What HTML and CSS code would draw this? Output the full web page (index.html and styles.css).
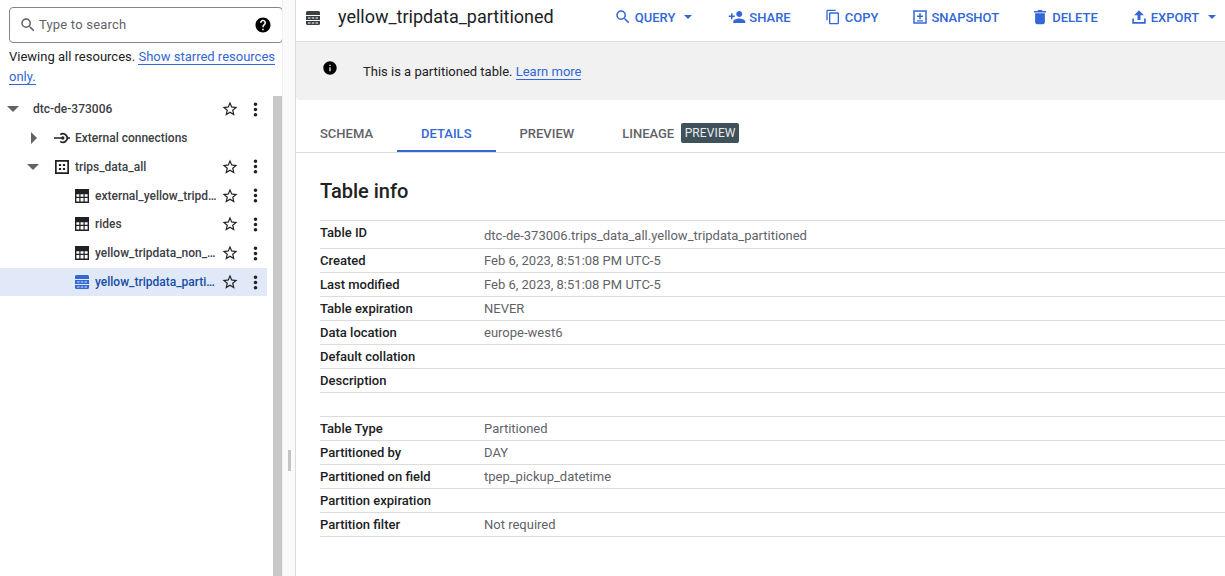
FILE: index.html
```html
<!DOCTYPE html>
<html lang="en">
<head>
    <meta charset="UTF-8">
    <meta name="viewport" content="width=device-width, initial-scale=1.0">
    <title>yellow_tripdata_partitioned</title>
    <link rel="stylesheet" href="styles.css">
</head>
<body>
    <svg class="sprites" width="0" height="0" aria-hidden="true">
        <symbol id="i-star" viewBox="0 0 24 24"><path d="M22 9.240l-7.190-.62L12 2 9.190 8.630 2 9.240l5.460 4.730L5.820 21 12 17.270 18.180 21l-1.630-7.030L22 9.240zM12 15.400l-3.760 2.270 1-4.280-3.320-2.880 4.380-.38L12 6.100l1.710 4.040 4.380.38-3.320 2.880 1 4.280L12 15.400z"/></symbol>
        <symbol id="i-more" viewBox="0 0 24 24"><path d="M12 8c1.100 0 2-.9 2-2s-.9-2-2-2-2 .9-2 2 .9 2 2 2zm0 2c-1.100 0-2 .9-2 2s.9 2 2 2 2-.9 2-2-.9-2-2-2zm0 6c-1.100 0-2 .9-2 2s.9 2 2 2 2-.9 2-2-.9-2-2-2z"/></symbol>
        <symbol id="i-table" viewBox="0 0 14 14"><path fill-rule="evenodd" d="M0 0h14v14H0zM1.400 5.200v2.600h2.900V5.200zm4.100 0v2.600h3V5.200zm4.200 0v2.600h2.900V5.200zM1.400 9v3.600h2.900V9zm4.100 0v3.600h3V9zm4.200 0v3.600h2.900V9z"/></symbol>
        <symbol id="i-part" viewBox="0 0 14 14"><path fill-rule="evenodd" d="M1.500 0h11A1.500 1.500 0 0 1 14 1.500V4H0V1.500A1.500 1.500 0 0 1 1.500 0zM0 5h14v4H0zM0 10h14v2.500a1.500 1.500 0 0 1-1.500 1.500h-11A1.500 1.500 0 0 1 0 12.500zM2 6.400v1.200h2.500V6.400zm3.800 0v1.200h2.400V6.400zm3.700 0v1.200H12V6.400zM2 11.400v1.200h2.500v-1.200zm3.800 0v1.200h2.400v-1.200zm3.700 0v1.200H12v-1.200z"/></symbol>
    </svg>

    <div class="app">
        <aside class="sidebar">
            <div class="sidebar-main">
                <div class="search">
                    <svg class="search-icon" viewBox="0 0 24 24"><path d="M15.500 14h-.79l-.28-.27A6.470 6.470 0 0 0 16 9.500 6.500 6.500 0 1 0 9.500 16c1.610 0 3.090-.59 4.230-1.570l.27.28v.79l5 4.990L20.490 19l-4.990-5zm-6 0C7.010 14 5 11.990 5 9.500S7.010 5 9.500 5 14 7.010 14 9.500 11.990 14 9.500 14z"/></svg>
                    <span class="search-text">Type to search</span>
                    <svg class="help-icon" viewBox="0 0 24 24"><path d="M12 2C6.480 2 2 6.480 2 12s4.480 10 10 10 10-4.480 10-10S17.520 2 12 2zm1 17h-2v-2h2v2zm2.070-7.750l-.9.920C13.450 12.900 13 13.500 13 15h-2v-.5c0-1.100.45-2.100 1.170-2.830l1.240-1.260c.37-.36.590-.86.590-1.410 0-1.100-.9-2-2-2s-2 .9-2 2H8c0-2.210 1.790-4 4-4s4 1.790 4 4c0 .88-.36 1.680-.93 2.250z"/></svg>
                </div>
                <p class="viewing">Viewing all resources. <a href="#">Show starred resources only.</a></p>
                <div class="tree">
                    <div class="tree-row project">
                        <span class="arrow down"></span>
                        <span class="node-name">dtc-de-373006</span>
                        <svg class="act star"><use href="#i-star"/></svg>
                        <svg class="act more"><use href="#i-more"/></svg>
                    </div>
                    <div class="tree-row connections">
                        <span class="arrow right"></span>
                        <svg class="node-icon conn-icon" viewBox="0 0 16 12"><path d="M0 5.200h7.800v1.600H0zM13.400 5.200H16v1.600h-2.600z"/><circle cx="8.800" cy="6" r="1.700"/><path class="conn-ring" d="M6.300 2.700a4.200 4.200 0 1 1 0 6.600"/></svg>
                        <span class="node-name">External connections</span>
                    </div>
                    <div class="tree-row dataset">
                        <span class="arrow down"></span>
                        <svg class="node-icon" viewBox="0 0 14 14"><path fill-rule="evenodd" d="M0 0h14v14H0zM1.700 1.700v10.600h10.600V1.700zM3.900 3.900h2.200v2.200H3.900zm4 0h2.200v2.200H7.900zM3.900 7.900h2.200v2.200H3.900zm4 0h2.200v2.200H7.900z"/></svg>
                        <span class="node-name">trips_data_all</span>
                        <svg class="act star"><use href="#i-star"/></svg>
                        <svg class="act more"><use href="#i-more"/></svg>
                    </div>
                    <div class="tree-row leaf">
                        <svg class="node-icon"><use href="#i-table"/></svg>
                        <span class="node-name">external_yellow_tripdata</span>
                        <svg class="act star"><use href="#i-star"/></svg>
                        <svg class="act more"><use href="#i-more"/></svg>
                    </div>
                    <div class="tree-row leaf">
                        <svg class="node-icon"><use href="#i-table"/></svg>
                        <span class="node-name">rides</span>
                        <svg class="act star"><use href="#i-star"/></svg>
                        <svg class="act more"><use href="#i-more"/></svg>
                    </div>
                    <div class="tree-row leaf">
                        <svg class="node-icon"><use href="#i-table"/></svg>
                        <span class="node-name">yellow_tripdata_non_partitioned</span>
                        <svg class="act star"><use href="#i-star"/></svg>
                        <svg class="act more"><use href="#i-more"/></svg>
                    </div>
                    <div class="tree-row leaf selected">
                        <svg class="node-icon"><use href="#i-part"/></svg>
                        <span class="node-name">yellow_tripdata_partitioned</span>
                        <svg class="act star"><use href="#i-star"/></svg>
                        <svg class="act more"><use href="#i-more"/></svg>
                    </div>
                </div>
            </div>
            <div class="scrollbar"><div class="thumb"></div></div>
            <div class="resizer"><div class="handle"></div></div>
        </aside>

        <main class="content">
            <header class="topbar">
                <svg class="title-icon"><use href="#i-part"/></svg>
                <h1>yellow_tripdata_partitioned</h1>
                <nav class="actions">
                    <a class="action action-query" href="#">
                        <svg viewBox="0 0 24 24"><path d="M15.500 14h-.79l-.28-.27A6.470 6.470 0 0 0 16 9.500 6.500 6.500 0 1 0 9.500 16c1.610 0 3.090-.59 4.230-1.570l.27.28v.79l5 4.990L20.490 19l-4.990-5zm-6 0C7.010 14 5 11.990 5 9.500S7.010 5 9.500 5 14 7.010 14 9.500 11.990 14 9.500 14z"/></svg>
                        QUERY<span class="caret"></span>
                    </a>
                    <a class="action" href="#">
                        <svg viewBox="0 0 24 24"><path d="M15 12c2.210 0 4-1.790 4-4s-1.790-4-4-4-4 1.790-4 4 1.790 4 4 4zm-9-2V7H4v3H1v2h3v3h2v-3h3v-2H6zm9 4c-2.670 0-8 1.340-8 4v2h16v-2c0-2.660-5.330-4-8-4z"/></svg>
                        SHARE
                    </a>
                    <a class="action action-copy" href="#">
                        <svg viewBox="0 0 24 24"><path d="M16 1H4c-1.100 0-2 .9-2 2v14h2V3h12V1zm3 4H8c-1.100 0-2 .9-2 2v14c0 1.100.9 2 2 2h11c1.100 0 2-.9 2-2V7c0-1.100-.9-2-2-2zm0 16H8V7h11v14z"/></svg>
                        COPY
                    </a>
                    <a class="action action-snapshot" href="#">
                        <svg viewBox="0 0 24 24"><path fill-rule="evenodd" d="M3 3h18v18H3zM5 5v14h14V5zm6 2h2v3h3v2h-3v3h-2v-3H8v-2h3zM8 16.200h8V18H8z"/></svg>
                        SNAPSHOT
                    </a>
                    <a class="action action-delete" href="#">
                        <svg viewBox="0 0 24 24"><path d="M5.500 19c0 1.300 1.100 2.500 2.500 2.500h8c1.400 0 2.500-1.200 2.500-2.500V7h-13v12zM20 4h-4.500l-1-1.500h-5l-1 1.500H4v2h16V4z"/></svg>
                        DELETE
                    </a>
                    <a class="action" href="#">
                        <svg viewBox="0 0 24 24"><path d="M12 3l-6.500 6.500H10V16h4V9.500h4.500zM3 14h2.200v4.800h13.600V14H21v7H3z"/></svg>
                        EXPORT<span class="caret"></span>
                    </a>
                </nav>
            </header>

            <div class="banner">
                <svg class="info-icon" viewBox="0 0 24 24"><path d="M12 2C6.480 2 2 6.480 2 12s4.480 10 10 10 10-4.480 10-10S17.520 2 12 2zm1 15h-2v-6h2v6zm0-8h-2V7h2v2z"/></svg>
                <span>This is a partitioned table. <a href="#">Learn more</a></span>
            </div>

            <div class="tabs">
                <a class="tab" href="#">SCHEMA</a>
                <a class="tab active" href="#">DETAILS</a>
                <a class="tab" href="#">PREVIEW</a>
                <a class="tab" href="#">LINEAGE<span class="tab-badge">PREVIEW</span></a>
            </div>

            <section class="details">
                <h2>Table info</h2>
                <dl class="info-list">
                    <div class="info-row first"><dt>Table ID</dt><dd>dtc-de-373006.trips_data_all.yellow_tripdata_partitioned</dd></div>
                    <div class="info-row"><dt>Created</dt><dd>Feb 6, 2023, 8:51:08 PM UTC-5</dd></div>
                    <div class="info-row"><dt>Last modified</dt><dd>Feb 6, 2023, 8:51:08 PM UTC-5</dd></div>
                    <div class="info-row"><dt>Table expiration</dt><dd>NEVER</dd></div>
                    <div class="info-row"><dt>Data location</dt><dd>europe-west6</dd></div>
                    <div class="info-row"><dt>Default collation</dt><dd></dd></div>
                    <div class="info-row"><dt>Description</dt><dd></dd></div>
                </dl>
                <dl class="info-list second">
                    <div class="info-row"><dt>Table Type</dt><dd>Partitioned</dd></div>
                    <div class="info-row"><dt>Partitioned by</dt><dd>DAY</dd></div>
                    <div class="info-row"><dt>Partitioned on field</dt><dd>tpep_pickup_datetime</dd></div>
                    <div class="info-row"><dt>Partition expiration</dt><dd></dd></div>
                    <div class="info-row"><dt>Partition filter</dt><dd>Not required</dd></div>
                </dl>
            </section>
        </main>
    </div>
</body>
</html>
```

FILE: styles.css
```css
* {
    box-sizing: border-box;
}

html, body {
    margin: 0;
    padding: 0;
    height: 100%;
    overflow: hidden;
}

body {
    font-family: Roboto, "Liberation Sans", sans-serif;
    font-size: 13px;
    color: #202124;
    background: #fff;
}

a {
    color: #3367d6;
    text-decoration: none;
}

.sprites {
    position: absolute;
}

.app {
    display: flex;
    height: 576px;
}

/* left panel */
.sidebar {
    display: flex;
    width: 296px;
    flex-shrink: 0;
    border-right: 1px solid #dadce0;
}

.sidebar-main {
    width: 267px;
    flex-shrink: 0;
    padding-top: 7px;
}

.search {
    display: flex;
    align-items: center;
    height: 36px;
    margin: 0 -16px 0 9px;
    padding: 0 10px 0 9px;
    border: 1px solid #80868b;
    border-radius: 4px;
}

.search-icon {
    width: 18px;
    height: 18px;
    fill: #5f6368;
}

.search-text {
    flex: 1;
    margin: -1px 0 0 2px;
    font-size: 13px;
    letter-spacing: .2px;
    color: #5f6368;
}

.help-icon {
    width: 18px;
    height: 18px;
}

.viewing {
    margin: 4px -16px 0 9px;
    font-size: 13px;
    line-height: 20px;
}

.viewing a {
    border-bottom: 1px solid #3367d6;
}

.tree {
    margin-top: 7.7px;
}

.tree-row {
    display: flex;
    align-items: center;
    height: 28.83px;
    font-size: 12px;
    font-weight: 500;
    color: #3c4043;
}

.node-name {
    flex: 1;
    min-width: 0;
    overflow: hidden;
    white-space: nowrap;
    text-overflow: ellipsis;
}

.project {
    padding-left: 7px;
}

.project .node-name {
    margin-left: 14px;
}

.connections,
.dataset {
    padding-left: 27px;
}

.leaf {
    padding-left: 75px;
}

.arrow {
    flex-shrink: 0;
}

.arrow.down {
    width: 0;
    height: 0;
    border-left: 6px solid transparent;
    border-right: 6px solid transparent;
    border-top: 6px solid #5f6368;
}

.arrow.right {
    margin-left: 4px;
    width: 0;
    height: 0;
    border-top: 6px solid transparent;
    border-bottom: 6px solid transparent;
    border-left: 6px solid #5f6368;
}

.node-icon {
    flex-shrink: 0;
    width: 14px;
    height: 14px;
    fill: #202124;
    margin-right: 6px;
}

.connections .node-icon {
    width: 16px;
    height: 12px;
    margin-left: 17px;
    margin-right: 5px;
}

.conn-ring {
    fill: none;
    stroke: #202124;
    stroke-width: 1.7;
}

.dataset .node-icon {
    margin-left: 16px;
    margin-right: 6px;
}

.act {
    flex-shrink: 0;
    fill: #202124;
}

.star {
    width: 18px;
    height: 18px;
    margin-left: 3px;
}

.more {
    width: 21px;
    height: 21px;
    margin: 0 1px 0 6px;
}

.selected {
    background: #e1e8f7;
}

.selected .node-name {
    color: #174ea6;
}

.selected .node-icon {
    fill: #3367d6;
}

.scrollbar {
    width: 15px;
    flex-shrink: 0;
    padding: 96px 0 0 6px;
}

.thumb {
    width: 9px;
    height: 480px;
    background: #c8c8c8;
}

.resizer {
    flex: 1;
    display: flex;
    justify-content: center;
    background: #fafafa;
    border-left: 1px solid #f1f1f1;
    padding-top: 450px;
}

.handle {
    width: 3px;
    height: 21px;
    background: #c4c4c4;
}

/* right panel */
.content {
    flex: 1;
    min-width: 0;
}

.topbar {
    display: flex;
    align-items: center;
    height: 42px;
    padding: 0 0 8px 10px;
    border-bottom: 1px solid #dadce0;
}

.title-icon {
    width: 14px;
    height: 14px;
    flex-shrink: 0;
    margin-top: 2px;
    fill: #3c4043;
}

h1 {
    margin: 0 0 0 18px;
    font-size: 18px;
    font-weight: 400;
    white-space: nowrap;
}

.actions {
    display: flex;
    align-items: center;
    margin-left: 60px;
    padding-top: 1px;
}

.action {
    display: flex;
    align-items: center;
    font-size: 13px;
    font-weight: 500;
    margin-right: 33px;
    white-space: nowrap;
}

.action svg {
    width: 18px;
    height: 18px;
    flex-shrink: 0;
    fill: #3367d6;
    margin-right: 3px;
}

.action-query {
    margin-right: 32px;
}

.action-copy svg {
    width: 16px;
    height: 16px;
    margin: 0 4px 0 1px;
}

.action-snapshot svg {
    margin-right: 2px;
}

.action-snapshot {
    margin-right: 32px;
}

.action-delete {
    margin-right: 32px;
}

.caret {
    width: 0;
    height: 0;
    margin-left: 9px;
    margin-right: 4px;
    border-left: 4px solid transparent;
    border-right: 4px solid transparent;
    border-top: 4px solid #3367d6;
}

.banner {
    display: flex;
    align-items: center;
    height: 58px;
    padding-left: 26px;
    background: #f1f1f1;
    border-bottom-left-radius: 4px;
}

.info-icon {
    width: 16px;
    height: 16px;
    margin: -7px 25px 0 0;
}

.banner a {
    border-bottom: 1px solid #3367d6;
}

.tabs {
    display: flex;
    height: 53px;
    border-bottom: 1px solid #dadce0;
}

.tab {
    display: flex;
    align-items: center;
    height: 52px;
    padding: 14px 24px 0;
    font-size: 13px;
    font-weight: 500;
    color: #5f6368;
}

.tab.active {
    padding-top: 16px;
    color: #3367d6;
    border-bottom: 2px solid #3367d6;
}

.tab-badge {
    margin-left: 7px;
    padding: 0 3.5px;
    height: 20px;
    line-height: 20px;
    font-size: 12px;
    font-weight: 400;
    letter-spacing: .1px;
    color: #e8eaed;
    background: #3f515a;
    border-radius: 2px;
}

.details {
    padding: 0 0 0 24px;
}

h2 {
    margin: 26px 0 17px;
    font-size: 20px;
    line-height: 24px;
    font-weight: 500;
}

.info-list {
    margin: 0;
    border-top: 1px solid #dadce0;
}

.info-list.second {
    margin-top: 23px;
}

.info-row {
    display: flex;
    align-items: center;
    height: 24px;
    border-bottom: 1px solid #dadce0;
}

.info-row.first {
    height: 28px;
}

.info-row.first dt {
    margin-top: -4px;
}

.info-row.first dd {
    margin-top: 2px;
}

dt {
    width: 164px;
    flex-shrink: 0;
    font-weight: 500;
    color: #202124;
}

dd {
    margin: 0;
    color: #5f6368;
}
```
